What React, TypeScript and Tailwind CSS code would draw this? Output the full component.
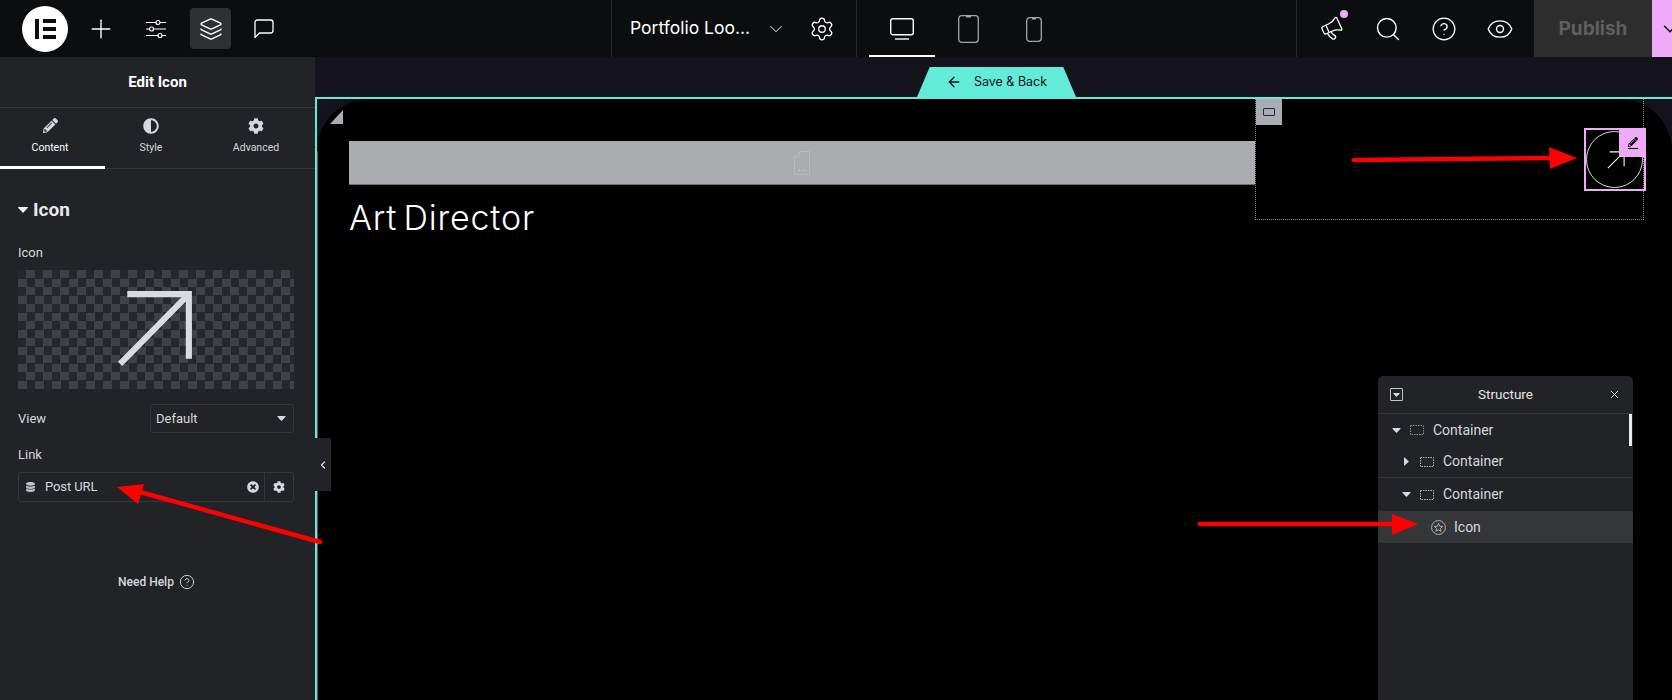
import { Plus, Layers, ChevronDown, Settings, Megaphone, Search, CircleHelp, Eye, X, ArrowLeft, ChevronLeft } from 'lucide-react';
import { FaPencilAlt, FaAdjust, FaCog, FaDatabase, FaTimesCircle } from 'react-icons/fa';

const Caret = ({ className = '' }: { className?: string }) => (
  <svg viewBox="0 0 10 6" className={className} fill="currentColor">
    <path d="M0 0.5 Q0 0 0.6 0 H9.4 Q10 0 10 0.5 Q10 0.8 9.6 1.1 L5.4 5.6 Q5 6 4.6 5.6 L0.4 1.1 Q0 0.8 0 0.5Z" />
  </svg>
);

const SlidersIcon = () => (
  <svg viewBox="0 0 20 20" className="w-[20px] h-[20px] text-white" fill="none" stroke="currentColor" strokeWidth="1.2">
    <path d="M0 3.5H10M14 3.5H20M0 10H3.5M7.5 10H20M0 16.5H12M16 16.5H20" />
    <circle cx="12" cy="3.5" r="2" />
    <circle cx="5.5" cy="10" r="2" />
    <circle cx="14" cy="16.5" r="2" />
  </svg>
);

const CommentIcon = () => (
  <svg viewBox="0 0 20 20" className="w-[20px] h-[20px] text-white" fill="none" stroke="currentColor" strokeWidth="1.3">
    <path d="M1 18.5V3.5Q1 1 3.5 1H16.5Q19 1 19 3.5V11.5Q19 14 16.5 14H5.5Z" strokeLinejoin="round" />
  </svg>
);

const DesktopIcon = () => (
  <svg viewBox="0 0 24 22" className="w-[24px] h-[22px] text-white" fill="none" stroke="currentColor" strokeWidth="1.4">
    <rect x="0.7" y="0.7" width="22.6" height="16" rx="2" />
    <path d="M5 21H19" />
  </svg>
);

const TabletIcon = () => (
  <svg viewBox="0 0 21 28" className="w-[21px] h-[28px] text-[#a4a5a7]" fill="none" stroke="currentColor" strokeWidth="1.3">
    <rect x="0.7" y="0.7" width="19.6" height="26.6" rx="3" />
    <path d="M8 1.5H13" strokeWidth="2" />
  </svg>
);

const PhoneIcon = () => (
  <svg viewBox="0 0 16 25" className="w-[16px] h-[25px] text-[#a4a5a7]" fill="none" stroke="currentColor" strokeWidth="1.3">
    <rect x="0.7" y="0.7" width="14.6" height="23.6" rx="3" />
    <path d="M6 1.5H10" strokeWidth="2" />
  </svg>
);

const ContainerIcon = ({ dim = false }: { dim?: boolean }) => (
  <svg viewBox="0 0 14 10" className={`w-[14px] h-[10px] ${dim ? 'text-[#8b8d90]' : 'text-[#b4b5b7]'}`} fill="none" stroke="currentColor">
    <rect x="0.5" y="0.5" width="13" height="9" strokeDasharray="1.5 1" />
  </svg>
);

const StarCircleIcon = () => (
  <svg viewBox="0 0 16 16" className="w-[15px] h-[15px] text-[#c4c5c7]" fill="none" stroke="currentColor" strokeWidth="0.9">
    <circle cx="8" cy="8" r="7.4" />
    <path d="M8 3.6L9.3 6.6L12.4 6.9L10.1 9L10.8 12.1L8 10.5L5.2 12.1L5.9 9L3.6 6.9L6.7 6.6Z" strokeLinejoin="round" />
  </svg>
);

function TreeRow({ label, indent, caret, divider, tall }: { label: string; indent: string; caret: 'down' | 'right'; divider?: boolean; tall?: boolean }) {
  return (
    <div className={`${tall ? 'h-[33px]' : 'h-[32px]'} flex items-center ${indent} ${divider ? 'border-b border-[#34363a]' : ''}`}>
      <span className="w-[10px] flex justify-center mr-[9px]">
        {caret === 'down' ? (
          <Caret className="w-[9px] h-[5px] text-[#d5d8dc]" />
        ) : (
          <Caret className="w-[9px] h-[5px] text-[#d5d8dc] -rotate-90" />
        )}
      </span>
      <ContainerIcon dim={indent === 'pl-[13px]'} />
      <span className="ml-[9px] text-[14px] text-[#d5d8dc]">{label}</span>
    </div>
  );
}

function TopBar() {
  return (
    <header className="h-[57px] bg-[#0c0d0f] flex items-stretch font-['Inter',sans-serif]">
      <div className="w-[611px] shrink-0 flex items-center pl-[22px]">
        <div className="w-[46px] h-[46px] rounded-full bg-white flex items-center justify-center gap-[4px]">
          <span className="w-[4px] h-[20px] bg-[#0c0d0f]" />
          <span className="flex flex-col gap-[4px]">
            <span className="w-[13px] h-[4px] bg-[#0c0d0f]" />
            <span className="w-[13px] h-[4px] bg-[#0c0d0f]" />
            <span className="w-[13px] h-[4px] bg-[#0c0d0f]" />
          </span>
        </div>
        <Plus className="w-[30px] h-[30px] text-white ml-[18px]" strokeWidth={1.1} />
        <span className="ml-[30px]">
          <SlidersIcon />
        </span>
        <div className="ml-[24px] w-[41px] h-[41px] rounded-[4px] bg-[#2f3033] flex items-center justify-center">
          <Layers className="w-[24px] h-[24px] text-white" strokeWidth={1.3} />
        </div>
        <span className="ml-[23px]">
          <CommentIcon />
        </span>
      </div>
      <div className="w-[245px] shrink-0 border-l border-[#26282b] flex items-center pl-[18px]">
        <span className="text-[17.5px] text-white w-[130px] whitespace-nowrap">Portfolio Loo...</span>
        <ChevronDown className="w-[22px] h-[22px] text-white ml-[5px]" strokeWidth={1} />
        <Settings className="w-[26px] h-[26px] text-white ml-[22px]" strokeWidth={1.2} />
      </div>
      <div className="w-[224px] shrink-0 border-l border-[#26282b] flex items-stretch pl-[12px]">
        <div className="w-[66px] pt-[3px] border-b-2 border-white flex items-center justify-center">
          <DesktopIcon />
        </div>
        <div className="w-[66px] pt-[1px] flex items-center justify-center">
          <TabletIcon />
        </div>
        <div className="w-[66px] pt-[1px] flex items-center justify-center">
          <PhoneIcon />
        </div>
      </div>
      <div className="w-[216px] shrink-0" />
      <div className="flex-1 min-w-0 border-l border-[#26282b] flex items-center pl-[23px]">
        <span className="relative w-[24px] shrink-0 flex justify-center">
          <Megaphone className="w-[26px] h-[26px] text-white -rotate-[25deg]" strokeWidth={1.3} />
          <span className="absolute -top-[6px] -right-[4px] w-[8px] h-[8px] rounded-full bg-[#eeabf7]" />
        </span>
        <Search className="w-[28px] h-[28px] text-white ml-[30px] shrink-0" strokeWidth={1.2} />
        <CircleHelp className="w-[26px] h-[26px] text-white ml-[29px] shrink-0" strokeWidth={1.2} />
        <Eye className="w-[28px] h-[28px] text-white ml-[29px] shrink-0" strokeWidth={1.2} />
        <div className="ml-[20px] w-[118px] shrink-0 h-full pt-[1px] bg-[#2d2d2e] flex items-center justify-center text-[19px] font-bold text-[#5e5f60]">
          Publish
        </div>
        <div className="flex-1 min-w-0 h-full bg-[#eeabf7] overflow-hidden flex items-center">
          <ChevronDown className="w-[22px] h-[22px] text-black ml-[7px] shrink-0" strokeWidth={1.5} />
        </div>
      </div>
    </header>
  );
}

function EditPanel() {
  return (
    <aside className="w-[315px] shrink-0 bg-[#212326] flex flex-col font-['Roboto',sans-serif]">
      <div className="h-[51px] border-b border-[#34363a] flex items-center justify-center text-[15px] font-bold text-white">
        Edit Icon
      </div>
      <div className="h-[61px] border-b border-[#34363a] flex text-[10.5px] relative">
        <div className="w-[105px] pr-[5px] flex flex-col items-center pt-[10px] text-white border-b-[3px] border-white h-[61px]">
          <FaPencilAlt className="w-[15px] h-[15px] text-[#d5d8dc]" />
          <span className="mt-[7px]">Content</span>
        </div>
        <div className="w-[92px] flex flex-col items-center pt-[10px] text-[#d5d8dc]">
          <FaAdjust className="w-[16px] h-[16px]" />
          <span className="mt-[6px]">Style</span>
        </div>
        <div className="flex-1 flex flex-col items-center pt-[10px] text-[#d5d8dc]">
          <FaCog className="w-[16px] h-[16px]" />
          <span className="mt-[6px]">Advanced</span>
        </div>
      </div>
      <div className="pl-[18px] w-[294px]">
        <div className="mt-[31px] flex items-center text-[#e8e9eb] text-[19px] font-bold leading-[20px]">
          <Caret className="w-[10px] h-[6px] mr-[5px] text-white" />
          Icon
        </div>
        <div className="mt-[23px] text-[13px] leading-[20px] text-[#d5d8dc]">Icon</div>
        <div className="mt-[7px] w-[276px] h-[119px] flex items-center justify-center bg-[repeating-conic-gradient(#3e4247_0_25%,#25272b_0_50%)] bg-[size:17px_17px]">
          <svg viewBox="0 0 76 76" className="w-[78px] h-[78px] text-[#d9dbde]" fill="none" stroke="currentColor" strokeWidth="6">
            <path d="M10 3H70V66M70 3L3 71" />
          </svg>
        </div>
        <div className="mt-[15px] flex items-center justify-between">
          <span className="text-[13px] text-[#d5d8dc]">View</span>
          <div className="w-[144px] h-[29px] rounded-[3px] border border-[#34363a] flex items-center justify-between pl-[5px] pr-[7px] text-[13px] text-[#d5d8dc]">
            Default
            <Caret className="w-[9px] h-[5px] text-[#d5d8dc]" />
          </div>
        </div>
        <div className="mt-[12px] text-[13px] leading-[20px] text-[#d5d8dc]">Link</div>
        <div className="mt-[7px] w-[276px] h-[30px] rounded-[3px] border border-[#34363a] flex items-center text-[13px] text-[#d5d8dc]">
          <FaDatabase className="w-[9px] h-[10px] ml-[7px] text-[#c0c3c7]" />
          <span className="ml-[10px] flex-1 tracking-[-0.1px]">Post URL</span>
          <FaTimesCircle className="w-[12px] h-[12px] mr-[5px] text-[#d5d8dc]" />
          <span className="h-full border-l border-[#34363a] w-[29px] flex items-center justify-center">
            <FaCog className="w-[12px] h-[12px] text-[#d5d8dc]" />
          </span>
        </div>
        <div className="mt-[71px] pl-[1px] flex items-center justify-center gap-[5px] text-[12px] font-medium text-[#d5d8dc]">
          Need Help
          <CircleHelp className="w-[16px] h-[16px]" strokeWidth={1.4} />
        </div>
      </div>
    </aside>
  );
}

function StructurePanel() {
  return (
    <div className="absolute top-[319px] left-[1063px] w-[255px] h-[340px] rounded-t-[5px] bg-[#212326] font-['Roboto',sans-serif]">
      <div className="h-[38px] border-b border-[#34363a] flex items-center justify-between pl-[12px] pr-[12px]">
        <span className="w-[13px] h-[13px] border border-[#c4c5c7] rounded-[1px] flex items-center justify-center">
          <Caret className="w-[7px] h-[4px] text-[#d5d8dc]" />
        </span>
        <span className="text-[13.5px] text-[#e4e5e7]">Structure</span>
        <X className="w-[13px] h-[13px] text-[#e4e5e7]" strokeWidth={1.8} />
      </div>
      <div className="relative">
        <span className="absolute right-[1px] top-0 w-[3px] h-[32px] bg-[#e8e9eb]" />
        <TreeRow label="Container" indent="pl-[13px]" caret="down" />
        <TreeRow label="Container" indent="pl-[23px]" caret="right" divider />
        <TreeRow label="Container" indent="pl-[23px]" caret="down" tall />
        <div className="h-[32px] bg-[#35363a] flex items-center pl-[53px]">
          <StarCircleIcon />
          <span className="ml-[8px] text-[14px] text-[#d5d8dc]">Icon</span>
        </div>
      </div>
    </div>
  );
}

function Canvas() {
  return (
    <main className="relative flex-1 bg-[#14121a] pt-[40px]">
      <div className="absolute top-[10px] left-[602px] w-[159px] h-[30px] bg-[#61ebd8] [clip-path:polygon(8%_0,92%_0,100%_100%,0_100%)] flex items-center justify-center gap-[12px] text-[12.5px] text-[#14121a] font-['Inter',sans-serif]">
        <ArrowLeft className="w-[16px] h-[16px]" strokeWidth={2} />
        Save &amp; Back
      </div>
      <div className="h-[603px] border-l-2 border-t-2 border-[#61ebd8]">
        <div className="h-full bg-black rounded-tl-[52px] rounded-tr-[52px] relative">
          <span className="absolute left-0 top-[52px] bottom-0 w-px bg-[#5f4f66]" />
          <span className="absolute left-[13px] top-[11px] w-[13px] h-[14px] bg-[#a9adb3] [clip-path:polygon(100%_0,100%_100%,0_100%)]" />
          <div className="flex items-start">
            <div className="w-[906px] ml-[32px] mt-[42px] shrink-0">
              <div className="h-[44px] bg-[#abacaf] border-b border-[#6c6d70] flex items-center justify-center">
                <svg viewBox="0 0 16 24" className="w-[16px] h-[24px] text-[#b9babd]" fill="none" stroke="currentColor">
                  <path d="M5.5 0.5H15.5V23.5H0.5V6Z M0.5 6H5.5V0.5" />
                  <path d="M4 19.5H12" strokeDasharray="2 1" strokeWidth="2" />
                </svg>
              </div>
              <div className="mt-[13px] text-[34px] leading-[40px] font-light text-white font-['Inter',sans-serif] tracking-[0.8px] [word-spacing:-4px]">
                Art Director
              </div>
            </div>
            <div className="relative w-[389px] h-[121px] border-l border-b border-r border-dotted border-[#8a8a8a]">
              <span className="absolute left-0 top-0 w-[26px] h-[26px] bg-[#a9adb3] flex items-center justify-center">
                <span className="w-[12px] h-[8px] border border-[#26282b] rounded-[1px]" />
              </span>
              <div className="absolute top-[29px] left-[328px] w-[62px] h-[63px] border-2 border-[#eeabf7]">
                <div className="w-[57px] h-[57px] mt-[1px] rounded-full border border-[#d9d9d9] relative">
                  <svg viewBox="0 0 20 20" className="absolute left-[20px] top-[19px] w-[18px] h-[18px] text-white" fill="none" stroke="currentColor" strokeWidth="1.2">
                    <path d="M3 1H19V17M19 1L1 19" />
                  </svg>
                </div>
                <span className="absolute -top-[2px] -right-[2px] w-[27px] h-[29px] bg-[#eeabf7] flex flex-col items-center justify-center">
                  <FaPencilAlt className="w-[10px] h-[10px] text-black" />
                  <span className="w-[10px] h-px mt-[1px] bg-black" />
                </span>
              </div>
            </div>
          </div>
        </div>
      </div>
      <div className="absolute left-0 top-[381px] w-[16px] h-[53px] bg-[#212326] flex items-center justify-center">
        <ChevronLeft className="w-[12px] h-[12px] text-[#e4e5e7]" strokeWidth={2.4} />
      </div>
      <StructurePanel />
    </main>
  );
}

function Annotations() {
  return (
    <svg viewBox="0 0 1672 700" className="absolute inset-0 w-[1672px] h-[700px] pointer-events-none">
      <g stroke="#fe0000" strokeWidth="4.5" strokeLinecap="round" fill="#fe0000">
        <path d="M1354 160L1552 158" />
        <path d="M1200 524L1395 524" />
        <path d="M320 542L140 492" />
      </g>
      <g fill="#fe0000">
        <polygon points="1549,147 1577,158 1550,169" />
        <polygon points="1392,514 1418,524 1392,535" />
        <polygon points="117,487 144,484 138,504" />
      </g>
    </svg>
  );
}

export default function App() {
  return (
    <div className="relative w-[1672px] h-[700px] overflow-hidden flex flex-col bg-[#14121a]">
      <TopBar />
      <div className="flex flex-1">
        <EditPanel />
        <Canvas />
      </div>
      <Annotations />
    </div>
  );
}
